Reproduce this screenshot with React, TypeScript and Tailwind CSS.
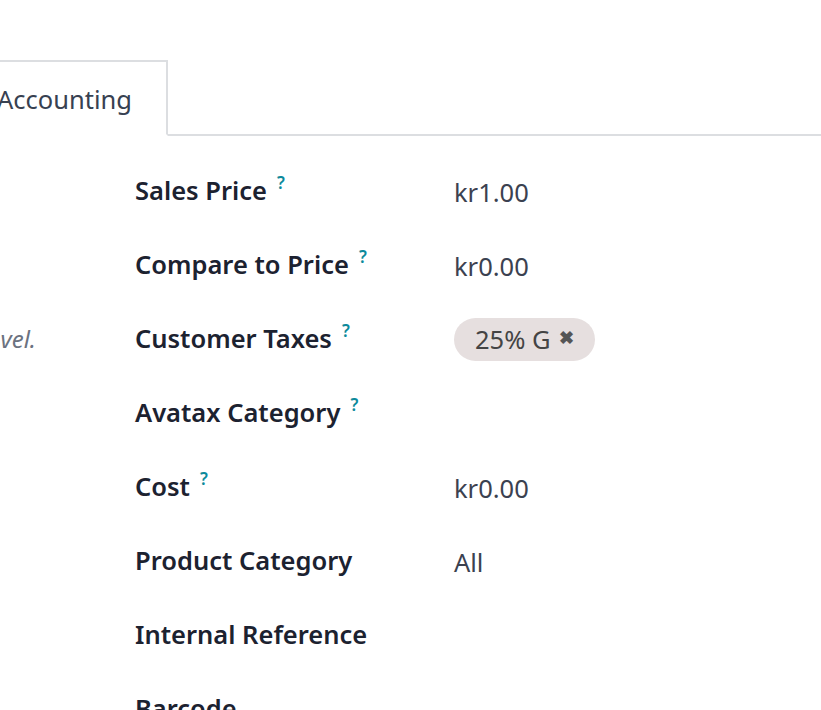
import React from "react";

const rows: { label: string; help?: boolean; value?: React.ReactNode; left?: string }[] = [
    { label: "Sales Price", help: true, value: "kr1.00" },
    { label: "Compare to Price", help: true, value: "kr0.00" },
    { label: "Customer Taxes", help: true, value: "tag", left: "vel." },
    { label: "Avatax Category", help: true },
    { label: "Cost", help: true, value: "kr0.00" },
    { label: "Product Category", value: "All" },
    { label: "Internal Reference" },
    { label: "Barcode" },
];

export default function App() {
    return (
        <main className="h-[710px] w-[821px] overflow-hidden bg-white" style={{ fontFamily: '"Noto Sans", "Open Sans", sans-serif' }}>
            {/* Tabs */}
            <div className="mt-[60px] flex border-b-2 border-[#dcdee1]">
                <div className="-ml-[30px] -mb-[2px] flex h-[76px] items-center border-2 border-b-white border-[#dcdee1] bg-white pl-[25px] pr-[34px] pt-[3px] text-[25.5px] text-[#374151]">
                    Accounting
                </div>
            </div>

            {/* Form */}
            <div className="pt-[18px]">
                {rows.map((r) => (
                    <div key={r.label} className="flex h-[74px] items-center">
                        <div className="w-[135px] shrink-0 overflow-hidden text-[24px] italic text-[#6b7280]">
                            {r.left && <span className="block w-[36px] text-right">{r.left}</span>}
                        </div>
                        <div className="w-[319px] shrink-0 whitespace-nowrap text-[25.5px] font-semibold leading-none text-[#1c2230]">
                            {r.label}
                            {r.help && <span className="relative -top-[11px] ml-[10px] text-[17px] font-semibold text-[#0d8a9b]">?</span>}
                        </div>
                        <div className="pt-[3px] text-[25.5px] text-[#3b4150]">
                            {r.value === "tag" ? (
                                <span className="-mt-[3px] flex h-[43px] w-[141px] items-center rounded-full bg-[#e6dfdf] pl-[21px] text-[#444]">
                                    25% G
                                    <span className="ml-[8px] -mt-[4px] text-[18px] font-bold text-[#555]">✖</span>
                                </span>
                            ) : (
                                r.value
                            )}
                        </div>
                    </div>
                ))}
            </div>
        </main>
    );
}
